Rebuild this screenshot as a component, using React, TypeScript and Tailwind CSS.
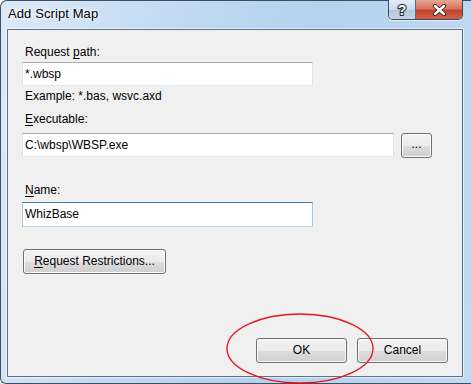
import React from "react";

const btn =
  "flex items-center justify-center rounded-[3px] border border-[#707070] bg-[linear-gradient(to_bottom,#f2f2f2_0%,#ebebeb_50%,#dddddd_51%,#cfcfcf_100%)] shadow-[inset_0_0_0_1px_#fbfbfb] text-[12px] text-black";

const box =
  "flex h-[24px] items-center border border-[#e2e3ea] border-t-[#abadb3] border-b-[#e3e9ef] bg-white pl-[2px] text-[12px]";

export default function App() {
  return (
    <div className="relative h-[384px] w-[471px] overflow-hidden bg-white font-['Liberation_Sans',Arial,sans-serif] text-[12px] leading-[15px] text-black">
      <div className="flex h-full w-full flex-col rounded-tl-[7px] rounded-bl-[6px] border-l border-t border-b border-[#3f4f60] bg-[linear-gradient(100deg,#dceaf8_0%,#c3dbf2_30%,#b4d1ee_60%,#c2daf2_100%)] pb-[6px] pl-[6px] pr-[8px]">
        {/* title bar */}
        <div className="flex h-[28px] items-start justify-between">
          <span className="pl-[1px] pt-[5px] text-[13px] leading-[15px] tracking-[0.1px] [text-shadow:0_0_6px_#ffffff,0_0_3px_#ffffff]">
            Add Script Map
          </span>
          <div className="-mt-[1px] flex h-[20px] overflow-hidden rounded-b-[5px] border border-t-0 border-[#3b4a5c] shadow-[0_1px_0_rgba(255,255,255,0.6)]">
            <div className="flex w-[27px] items-center justify-center border-r border-[#5b6c80] bg-[linear-gradient(to_bottom,#e4edf6_0%,#cbdaea_50%,#b3c6da_51%,#c6d6e6_100%)]">
              <svg width="12" height="16" viewBox="0 0 12 16">
                <text
                  x="6"
                  y="13"
                  textAnchor="middle"
                  fontFamily="'Liberation Sans', Arial, sans-serif"
                  fontWeight="bold"
                  fontSize="14"
                  fill="#ffffff"
                  stroke="#1d2a38"
                  strokeWidth="2.2"
                  paintOrder="stroke"
                  strokeLinejoin="round"
                >
                  ?
                </text>
              </svg>
            </div>
            <div className="flex w-[46px] items-center justify-center bg-[linear-gradient(to_bottom,#e9a595_0%,#d8735f_45%,#c2432b_55%,#d4604a_100%)]">
              <svg width="15" height="12" viewBox="0 0 15 12">
                <path
                  d="M3 2 L12 10 M12 2 L3 10"
                  stroke="#3a1a14"
                  strokeWidth="4.2"
                  strokeLinecap="round"
                />
                <path
                  d="M3 2 L12 10 M12 2 L3 10"
                  stroke="#ffffff"
                  strokeWidth="2.4"
                  strokeLinecap="round"
                />
              </svg>
            </div>
          </div>
        </div>

        {/* client area */}
        <div className="flex flex-1 flex-col border border-[#5e7185] bg-[#f0f0f0] pb-[13px] pl-[14px] pr-[14px] shadow-[0_0_0_1px_rgba(255,255,255,0.55)]">
          <div className="mt-[15px] pl-[3px]">
            Request <span className="underline underline-offset-2">p</span>ath:
          </div>
          <div className={`${box} mt-[2px] w-[291px]`}>*.wbsp</div>
          <div className="mt-[3px] pl-[3px]">Example: *.bas, wsvc.axd</div>

          <div className="mt-[8px] pl-[3px]">
            <span className="underline underline-offset-2">E</span>xecutable:
          </div>
          <div className="mt-[6px] flex items-start gap-[7px]">
            <div className={`${box} h-[23px] w-[372px]`}>C:\wbsp\WBSP.exe</div>
            <button className={`${btn} h-[25px] w-[31px] pb-[3px]`}>...</button>
          </div>

          <div className="mt-[25px] pl-[3px]">
            <span className="underline underline-offset-2">N</span>ame:
          </div>
          <div className="mt-[4px] flex h-[25px] w-[291px] items-center border border-[#a4c9e3] border-t-[#3d7bad] border-b-[#b7d9ed] bg-white pl-[2px]">
            WhizBase
          </div>

          <button className={`${btn} ml-[1px] mt-[22px] h-[25px] w-[143px]`}>
            <span>
              <span className="underline underline-offset-2">R</span>equest Restrictions...
            </span>
          </button>

          <div className="mt-auto flex justify-end gap-[10px]">
            <button className={`${btn} h-[25px] w-[91px] border-[#3c7fb1] shadow-[inset_0_0_0_1px_#a9def9,inset_0_0_0_2px_#e8f5fd]`}>
              OK
            </button>
            <button className={`${btn} h-[25px] w-[91px]`}>Cancel</button>
          </div>
        </div>
      </div>

      {/* red highlight ellipse */}
      <svg
        className="pointer-events-none absolute left-[226px] top-[313px]"
        width="148"
        height="71"
        viewBox="0 0 148 71"
      >
        <ellipse cx="74" cy="35.5" rx="73" ry="34.5" fill="none" stroke="#e8141b" strokeWidth="1.3" />
      </svg>
    </div>
  );
}
